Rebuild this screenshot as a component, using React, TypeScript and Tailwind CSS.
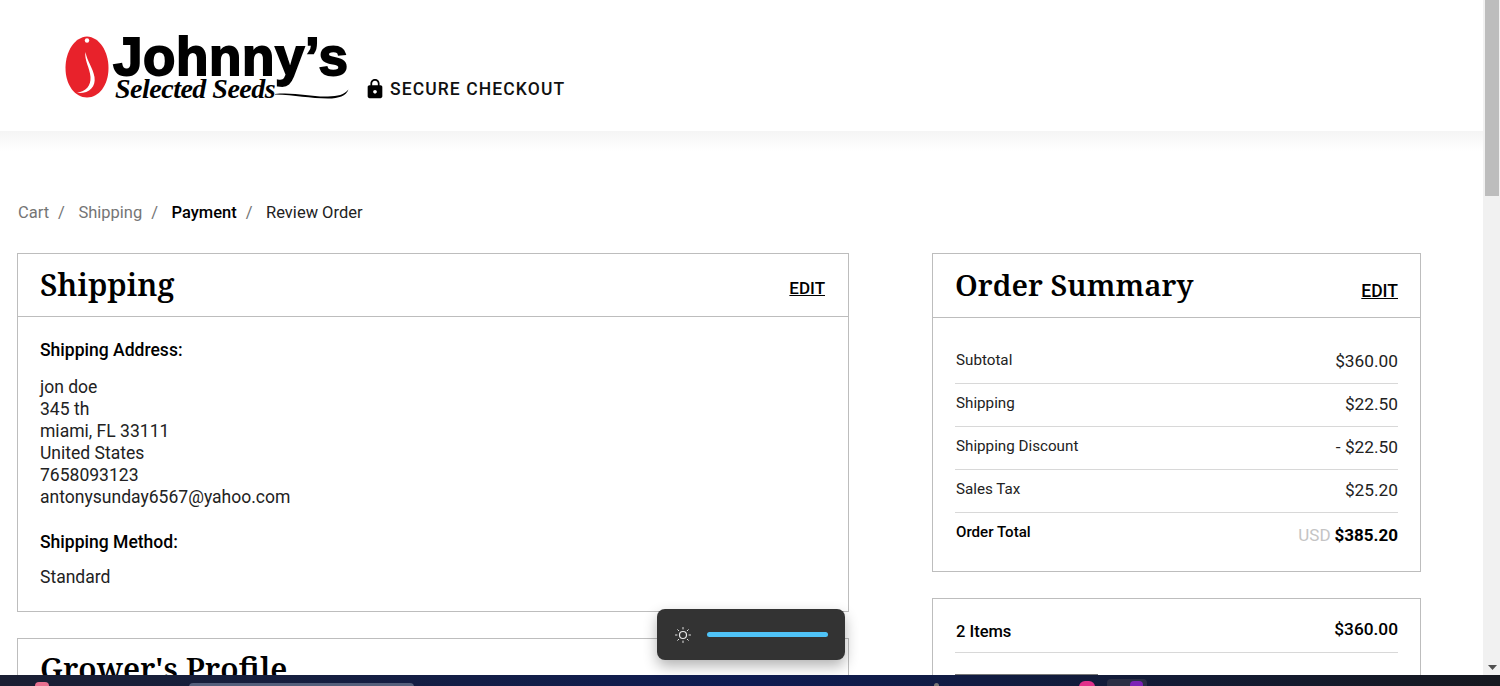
const roboto = { fontFamily: 'Roboto, "Liberation Sans", sans-serif' }

function Logo() {
  return (
    <div className="flex w-[284px] items-start">
      <svg width="44" height="62" viewBox="0 0 44 62" className="shrink-0">
        <path d="M22 0.500 C34 1 43.500 15 43.500 32 C43.500 49 34 61.500 22 61.500 C10 61.500 0.500 49 0.500 32 C0.500 15 10 1 22 0.500 Z" fill="#e8222b" />
        <circle cx="22" cy="4.500" r="2.200" fill="#fff" />
        <path d="M20.500 16 C19 24 25 32 25.500 41 C26 50 21 55 12 57 C24 58 31 51 29.500 41 C28 32 22 25 20.500 16 Z" fill="#fff" />
      </svg>
      <div className="ml-[4px] w-[236px]">
        <div className="h-[42px] text-[53px] leading-[42px] font-black tracking-[0.6px] whitespace-nowrap text-black [font-family:'Liberation_Sans',sans-serif] [-webkit-text-stroke:1.800px_#000]">
          Johnny&#8217;s
        </div>
        <div className="-mt-[1px] ml-[2px] flex items-start">
          <span className="h-[24px] w-[160px] shrink-0 text-[28px] leading-[24px] font-bold tracking-[-0.5px] whitespace-nowrap text-black italic [font-family:'Liberation_Serif',serif]">
            Selected Seeds
          </span>
          <svg width="74" height="10" viewBox="0 0 74 10" className="mt-[12px] shrink-0">
            <path d="M0 5 C20 3 35 8 53 7.500 C63 7 69 6 73.500 0.500 C71 7 64 9.500 53 9.500 C35 9.500 20 6 0 5.500 Z" fill="#000" />
          </svg>
        </div>
      </div>
    </div>
  )
}

function SummaryRow({ label, value }: { label: string; value: string }) {
  return (
    <div className="flex h-[43px] justify-between border-b border-[#d8d8d8] pt-[9px]">
      <span className="ml-[1px] text-[15.200px] leading-[20px] text-[#222]">{label}</span>
      <span className="-mt-[1px] text-[17.300px] leading-[24px] text-[#222]">{value}</span>
    </div>
  )
}

export default function App() {
  return (
    <div className="relative flex h-[686px] w-[1500px] flex-col overflow-hidden bg-white text-black" style={roboto}>
      <div className="flex h-[675px] overflow-hidden">
        <main className="w-[1483px] shrink-0">
          <header className="flex h-[131px] bg-white pt-[36px] pl-[65px]">
            <Logo />
            <div className="mt-[42px] ml-[15px] flex h-[22px] items-center gap-[4px]">
              <svg width="22" height="22" viewBox="0 0 24 24" fill="#000">
                <path d="M18 8h-1V6c0-2.760-2.240-5-5-5S7 3.240 7 6v2H6c-1.100 0-2 .9-2 2v10c0 1.100.9 2 2 2h12c1.100 0 2-.9 2-2V10c0-1.100-.9-2-2-2zm-6 9c-1.100 0-2-.9-2-2s.9-2 2-2 2 .9 2 2-.9 2-2 2zm3.100-9H8.900V6c0-1.710 1.390-3.100 3.100-3.100 1.710 0 3.100 1.390 3.100 3.100v2z" />
              </svg>
              <span className="text-[17.500px] font-medium tracking-[1.100px] text-[#111]">SECURE CHECKOUT</span>
            </div>
          </header>
          <div className="h-[20px] bg-gradient-to-b from-[#f5f5f5] to-white" />

          <nav className="mt-[52px] flex h-[20px] pl-[18px] text-[16.500px] leading-[20px]">
            <span className="text-[#757575]">Cart</span>
            <span className="mr-[13.500px] ml-[9px] text-[#757575]">/</span>
            <span className="text-[#757575]">Shipping</span>
            <span className="mr-[13.500px] ml-[9px] text-[#757575]">/</span>
            <span className="font-medium text-black">Payment</span>
            <span className="mr-[13.500px] ml-[9px] text-[#757575]">/</span>
            <span className="text-[#222]">Review Order</span>
          </nav>

          <div className="mt-[30px] flex pl-[17px]">
            <div className="w-[832px] shrink-0">
              <section className="h-[359px] border border-[#bdbdbd]">
                <div className="flex h-[63px] items-start justify-between border-b border-[#bdbdbd] pr-[23px] pl-[22px]">
                  <h2 className="mt-[10px] text-[30.700px] leading-[40px] font-semibold text-black [font-family:'Noto_Serif','DejaVu_Serif',serif]">Shipping</h2>
                  <a className="mt-[24px] text-[17px] leading-[20px] font-medium text-black underline">EDIT</a>
                </div>
                <div className="px-[22px] pt-[22px] text-[17.550px] leading-[22px] text-[#222]">
                  <div className="font-medium text-black">Shipping Address:</div>
                  <div className="mt-[15px]">
                    <div>jon doe</div>
                    <div>345 th</div>
                    <div>miami, FL 33111</div>
                    <div>United States</div>
                    <div>7658093123</div>
                    <div>antonysunday6567@yahoo.com</div>
                  </div>
                  <div className="mt-[23px] font-medium text-black">Shipping Method:</div>
                  <div className="mt-[13px]">Standard</div>
                </div>
              </section>
              <section className="mt-[26px] h-[60px] border border-[#bdbdbd] px-[22px]">
                <h2 className="mt-[9px] text-[30.600px] leading-[40px] font-semibold text-black [font-family:'Noto_Serif','DejaVu_Serif',serif]">Grower&#39;s Profile</h2>
              </section>
            </div>

            <div className="ml-[83px] w-[489px] shrink-0">
              <section className="h-[319px] border border-[#bdbdbd]">
                <div className="flex h-[64px] items-start justify-between border-b border-[#bdbdbd] px-[22px]">
                  <h2 className="mt-[11px] text-[29.600px] leading-[40px] font-semibold text-black [font-family:'Noto_Serif','DejaVu_Serif',serif]">Order Summary</h2>
                  <a className="mt-[27px] text-[17.500px] leading-[20px] font-medium text-black underline">EDIT</a>
                </div>
                <div className="px-[22px] pt-[23px]">
                  <SummaryRow label="Subtotal" value="$360.00" />
                  <SummaryRow label="Shipping" value="$22.50" />
                  <SummaryRow label="Shipping Discount" value="- $22.50" />
                  <SummaryRow label="Sales Tax" value="$25.20" />
                  <div className="flex justify-between pt-[5px]">
                    <span className="ml-[1px] text-[15.100px] leading-[28px] font-medium text-black">Order Total</span>
                    <span className="mt-[4px] text-[17px] leading-[26px] font-bold text-black">
                      <span className="mr-[4px] font-normal text-[#c4c4c4]">USD</span>$385.20
                    </span>
                  </div>
                </div>
              </section>
              <section className="mt-[26px] h-[90px] border border-[#bdbdbd] px-[22px]">
                <div className="flex h-[54px] justify-between border-b border-[#d8d8d8] pt-[18px]">
                  <span className="mt-[3px] ml-[1px] text-[16.500px] leading-[24px] font-medium text-black">2 Items</span>
                  <span className="text-[17.300px] leading-[24px] font-medium text-black">$360.00</span>
                </div>
                <div className="mt-[21px] h-[2px] w-[143px] bg-[#777]" />
              </section>
            </div>
          </div>
        </main>

        <aside className="flex w-[17px] shrink-0 flex-col bg-[#f1f1f1] pl-[2px]">
          <div className="h-[196px] w-[14px] bg-[#bdbdbd]" />
          <div className="mt-auto mb-[5px] flex justify-center">
            <svg width="9" height="5" viewBox="0 0 9 5"><path d="M0 0 H9 L4.500 5 Z" fill="#505050" /></svg>
          </div>
        </aside>
      </div>

      <footer className="flex h-[11px] items-start bg-gradient-to-r from-[#1a1f33] via-[#0f1c52] to-[#16181f]">
        <div className="mt-[7px] ml-[35px] h-[8px] w-[14px] rounded-full bg-[#e8708f]" />
        <div className="mt-[8px] ml-[140px] h-[4px] w-[225px] rounded-t-full bg-[#55607c]" />
        <div className="mt-[8px] ml-[520px] h-[4px] w-[5px] rounded-t-full bg-[#777]" />
        <div className="mt-[6px] ml-[140px] h-[6px] w-[16px] rounded-t-full bg-[#e0308a]" />
        <div className="mt-[4px] ml-[12px] flex h-[8px] w-[40px] justify-center rounded-t-[4px] bg-[#2a2f45] pt-[2px]">
          <div className="ml-[18px] h-[8px] w-[13px] rounded-full bg-[#7b22b5]" />
        </div>
      </footer>

      <div className="absolute top-[609px] left-[657px] flex h-[51px] w-[188px] items-center rounded-[8px] bg-[#333] pl-[17px] shadow-[0_6px_14px_rgba(0,0,0,0.3)]">
        <svg width="18" height="18" viewBox="0 0 18 18" fill="none" stroke="#e8e8e8" strokeLinecap="round">
          <circle cx="9" cy="9" r="3.500" strokeWidth="1.200" />
          <path d="M9 1.500v1.500M9 15v1.500M1.500 9H3M15 9h1.500M3.700 3.700l1 1M13.300 13.300l1 1M3.700 14.300l1-1M13.300 4.700l1-1" strokeWidth="1" />
        </svg>
        <div className="ml-[15px] h-[5px] w-[121px] rounded-full bg-[#4fc3f7]" />
      </div>
    </div>
  )
}
